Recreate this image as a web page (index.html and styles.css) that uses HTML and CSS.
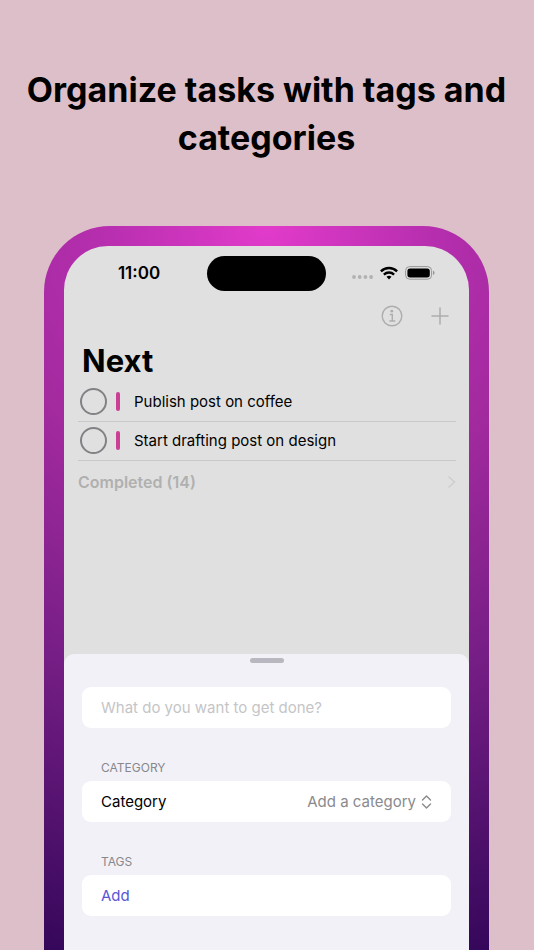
FILE: index.html
```html
<!DOCTYPE html>
<html lang="en">

<head>
    <meta charset="UTF-8">
    <meta name="viewport" content="width=device-width, initial-scale=1">
    <title>Organize tasks with tags and categories</title>
    <link rel="stylesheet" href="styles.css">
</head>

<body>
    <div class="page">
        <h1 class="headline">Organize tasks with tags and categories</h1>
        <div class="phone">
            <div class="screen">
                <div class="status">
                    <span class="time">11:00</span>
                    <span class="island"></span>
                    <div class="signals">
                        <svg width="22" height="16" viewBox="0 0 22 16" fill="#b2b2b2">
                            <circle cx="3" cy="12" r="1.9"/>
                            <circle cx="8.700" cy="12" r="1.9"/>
                            <circle cx="14.400" cy="12" r="1.9"/>
                            <circle cx="20.100" cy="12" r="1.9"/>
                        </svg>
                        <svg width="18" height="14" viewBox="0 0 18 14" fill="none" stroke="#000" stroke-width="2.4">
                            <path d="M.9 5.3a11.6 11.6 0 0 1 16.2 0"/>
                            <path d="M3.9 8.6a7.3 7.3 0 0 1 10.2 0"/>
                            <path d="M9 13.4l-2.5-2.6a3.7 3.7 0 0 1 5 0z" fill="#000" stroke="none"/>
                        </svg>
                        <svg width="30" height="14" viewBox="0 0 30 14">
                            <rect x=".6" y=".6" width="26" height="12.6" rx="4" fill="none" stroke="#979797"/>
                            <rect x="2.4" y="2.4" width="22.4" height="9" rx="2.6"/>
                            <path d="M28 4.8c2 .6 2 3.600 0 4.200z" fill="#979797"/>
                        </svg>
                    </div>
                </div>
                <div class="toolbar">
                    <button class="icon_btn" type="button" aria-label="Info">
                        <svg width="22" height="22" viewBox="0 0 22 22" fill="none" stroke="#adadad" stroke-width="1.4">
                            <circle cx="11" cy="11" r="9.8"/>
                            <circle cx="10.800" cy="6.200" r="1.4" fill="#adadad" stroke="none"/>
                            <path d="M8.800 9.500h2.500v6.400M8.300 16h6"/>
                        </svg>
                    </button>
                    <button class="icon_btn" type="button" aria-label="New task">
                        <svg width="18" height="18" viewBox="0 0 18 18" fill="none" stroke="#adadad" stroke-width="1.5" stroke-linecap="round">
                            <path d="M9 1v16M1 9h16"/>
                        </svg>
                    </button>
                </div>
                <div class="tasks">
                    <h2 class="title">Next</h2>
                    <ul class="list">
                        <li>
                            <input type="checkbox" id="task1">
                            <span class="mark"></span>
                            <label for="task1">Publish post on coffee</label>
                        </li>
                        <li>
                            <input type="checkbox" id="task2">
                            <span class="mark"></span>
                            <label for="task2">Start drafting post on design</label>
                        </li>
                    </ul>
                    <button class="completed" type="button">
                        Completed (14)
                        <svg width="9" height="14" viewBox="0 0 9 14" fill="none" stroke="#cecece" stroke-width="1.5">
                            <path d="M1.500 1.500L7.500 7l-6 5.500"/>
                        </svg>
                    </button>
                </div>
                <form class="sheet">
                    <span class="grabber"></span>
                    <input class="card" type="text" aria-label="Task" placeholder="What do you want to get done?">
                    <h3 class="caption">CATEGORY</h3>
                    <div class="card">
                        <label for="category">Category</label>
                        <select id="category">
                            <option>Add a category</option>
                        </select>
                        <svg width="11" height="14" viewBox="0 0 11 14" fill="none" stroke="#8a8a8e" stroke-width="1.4" stroke-linecap="round" stroke-linejoin="round">
                            <path d="M1.500 5l4-4 4 4M1.500 9l4 4 4-4"/>
                        </svg>
                    </div>
                    <h3 class="caption">TAGS</h3>
                    <button class="card add" type="button">Add</button>
                </form>
            </div>
        </div>
    </div>
</body>

</html>
```
FILE: styles.css
```css
* {
    box-sizing: border-box;
}

body {
    margin: 0;
    background: #dcbfc8;
    font-family: Inter, "Liberation Sans", sans-serif;
    font-size: 15px;
    color: #000;
}

h1,
h2,
h3,
ul {
    margin: 0;
    padding: 0;
    list-style: none;
}

button,
input,
select {
    margin: 0;
    padding: 0;
    border: 0;
    background: none;
    font: inherit;
    color: inherit;
    outline: none;
    appearance: none;
}

svg {
    display: block;
    flex: none;
}

.page {
    display: flex;
    flex-direction: column;
    min-height: 100vh;
    padding: 66px 45px 0 44px;
}

.headline {
    margin: 0 -30px 64px;
    font-size: 34px;
    line-height: 48px;
    font-weight: 700;
    text-align: center;
}

.phone {
    flex: 1;
    display: flex;
    padding: 20px 20px 0;
    border-radius: 66px 66px 0 0;
    background: radial-gradient(circle at 50% 0, #e23bcb 0, #b52eae 170px, #a32a9f 280px, #761e85 480px, #34075a 760px);
}

.screen {
    flex: 1;
    display: flex;
    flex-direction: column;
    border-radius: 44px 44px 0 0;
    background: #e0e0e0;
    overflow: hidden;
}

.status {
    display: grid;
    grid-template-columns: 1fr 119px 1fr;
    align-items: center;
    height: 54px;
}

.status .time {
    padding-left: 7px;
    font-size: 17px;
    font-weight: 600;
    text-align: center;
}

.status .island {
    height: 35px;
    border-radius: 18px;
    background: #000;
}

.status .signals {
    display: flex;
    justify-content: flex-end;
    align-items: center;
    gap: 7px;
    padding-right: 34px;
}

.toolbar {
    display: flex;
    justify-content: flex-end;
    align-items: center;
    gap: 28px;
    height: 32px;
    padding-right: 20px;
}

.tasks {
    flex: 1;
    padding: 7px 13px 24px 14px;
}

.tasks .title {
    padding: 0 4px;
    font-size: 31px;
    line-height: 44px;
}

.list li {
    display: flex;
    align-items: center;
    height: 39px;
    padding: 0 0 1px 2px;
    border-bottom: 1px solid #c8c8c9;
}

.list input {
    width: 27px;
    height: 27px;
    border: 2px solid #818186;
    border-radius: 50%;
}

.list input:checked {
    background: #818186;
}

.list .mark {
    width: 4px;
    height: 19px;
    margin: 0 14px 0 9px;
    border-radius: 2px;
    background: #cb3f97;
}

.completed {
    display: flex;
    justify-content: space-between;
    align-items: center;
    width: 100%;
    height: 42px;
    font-size: 16px;
    font-weight: 600;
    color: #b0b0b0;
}

.sheet {
    display: flex;
    flex-direction: column;
    padding: 4px 18px 34px;
    border-radius: 10px 10px 0 0;
    background: #f2f1f7;
}

.grabber {
    align-self: center;
    width: 34px;
    height: 5px;
    margin-bottom: 24px;
    border-radius: 3px;
    background: #b9b8c0;
}

.card {
    display: flex;
    align-items: center;
    width: 100%;
    height: 41px;
    padding: 0 19px;
    border-radius: 9px;
    background: #fff;
}

.card::placeholder {
    color: #c5c5c7;
    opacity: 1;
}

.card select {
    flex: 1;
    margin-right: 5px;
    text-align-last: right;
    color: #8a8a8e;
}

.card.add {
    color: #5a55d6;
}

.caption {
    margin: 30px 19px 3px;
    font-size: 12px;
    line-height: 20px;
    font-weight: 400;
    color: #87878c;
}
```
